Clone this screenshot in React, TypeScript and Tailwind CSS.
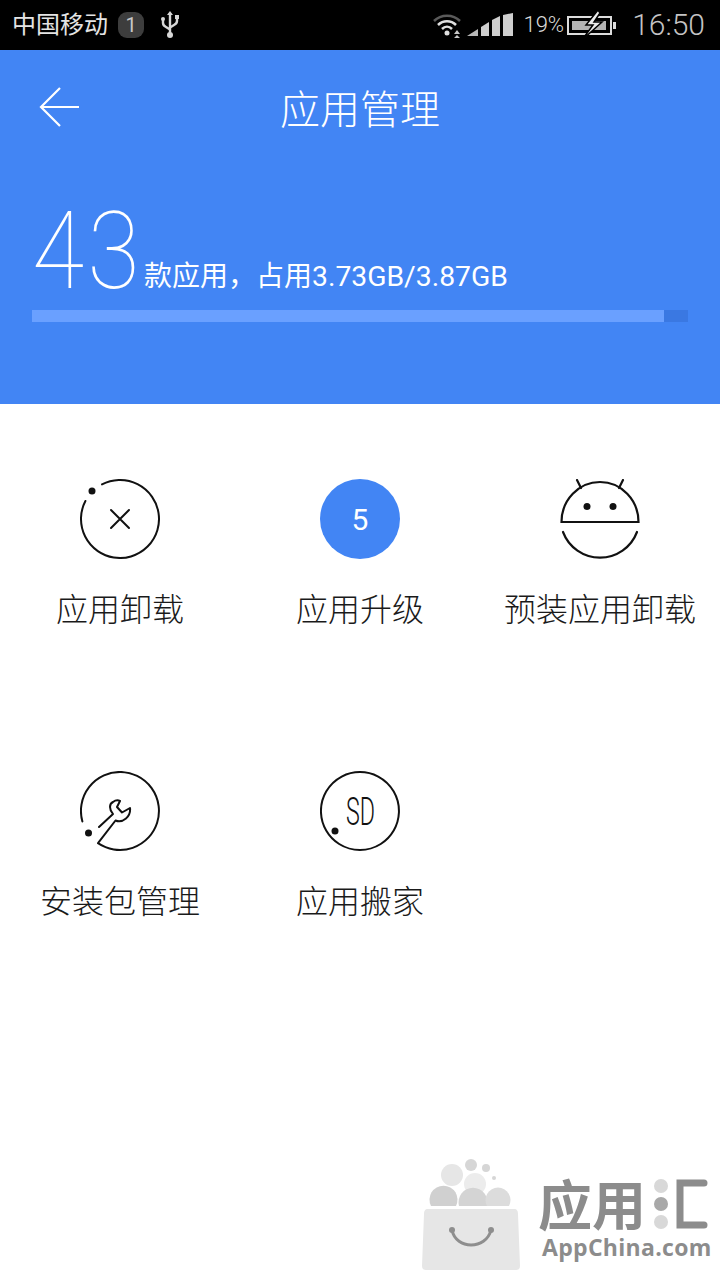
import React from 'react'

const cjk = "font-['Roboto','Noto_Sans_CJK_SC',sans-serif]"

const StatusBar = () => (
  <div className={`h-[50px] bg-black flex items-center pl-3 pr-[15px] text-[#e4e4e4] ${cjk}`}>
    <span className="text-[24px] leading-none">中国移动</span>
    <span className="ml-[10px] w-[26px] h-[26px] rounded-[9px] bg-[#3d3d3d] text-[#c8c8c8] text-[20px] leading-[26px] text-center">1</span>
    <svg className="ml-[15px]" width="22" height="30" viewBox="0 0 22 30" fill="none" stroke="#d8d8d8" strokeWidth="2.4">
      <path d="M11 3V24" />
      <path d="M11 1l3 4H8z" fill="#d8d8d8" stroke="none" />
      <path d="M4 10v3c0 2 1 3 3 4l4 2.500" />
      <path d="M18 8v3c0 2-1 3-3 4l-4 2.500" />
      <circle cx="4" cy="9" r="2" fill="#d8d8d8" stroke="none" />
      <rect x="16" y="5" width="4" height="4" fill="#d8d8d8" stroke="none" />
      <circle cx="11" cy="25" r="3" fill="#d8d8d8" stroke="none" />
    </svg>
    <div className="ml-auto flex items-center">
      <svg width="28" height="28" viewBox="0 0 28 28" fill="none">
        <path d="M1 10C8 3 20 3 27 10" stroke="#5a5a5a" strokeWidth="2.500" />
        <path d="M5 14C10 9 18 9 23 14" stroke="#e0e0e0" strokeWidth="2.500" />
        <path d="M9 18C12 15 16 15 19 18" stroke="#e0e0e0" strokeWidth="2.500" />
        <circle cx="14" cy="22" r="2.500" fill="#e0e0e0" />
        <path d="M24 19l3 4h-6zM24 24l3 3h-6z" fill="#c8c8c8" />
      </svg>
      <svg className="ml-[6px]" width="48" height="24" viewBox="0 0 48 24" fill="#cfcfcf">
        <path d="M0 23L11 16V23Z" fill="#b8b8b8" />
        <path d="M14 14L22 9V23H14Z" />
        <path d="M25 7L33 3V23H25Z" />
        <path d="M36 2L46 0V23H36Z" />
      </svg>
      <span className="ml-[8px] text-[22px] leading-none text-[#d8d8d8] font-light">19%</span>
      <svg className="ml-[3px]" width="50" height="32" viewBox="0 0 50 32" fill="none">
        <rect x="1" y="8" width="43" height="17" stroke="#dcdcdc" strokeWidth="2" />
        <rect x="46" y="13" width="3" height="7" fill="#dcdcdc" />
        <path d="M5 12H39V21H5Z" fill="#b4b4b4" />
        <path d="M31 1L19 16H26L15 31L35 13H27L33 4Z" fill="#ececec" stroke="#000" strokeWidth="1.500" />
      </svg>
      <span className="ml-[15px] text-[30px] leading-none font-light text-[#c4c4c4]">16:50</span>
    </div>
  </div>
)

const Header = () => (
  <div className="h-[354px] bg-[#4285f4] text-white">
    <div className="relative h-[122px] flex items-center justify-center">
      <svg className="absolute left-[38px] top-[35px]" width="44" height="44" viewBox="0 0 44 44" fill="none" stroke="#fff" strokeWidth="2.200">
        <path d="M41 22H4" />
        <path d="M22 3L3 22L22 41" />
      </svg>
      <span className={`text-[40px] leading-none font-light ${cjk}`}>应用管理</span>
    </div>
    <div className="h-[138px] pl-[32px] flex items-end">
      <span className="w-[112px] h-[113px] shrink-0 origin-left scale-x-[0.88] font-['Roboto',sans-serif] text-[108px] leading-none font-thin tracking-[4px]">43</span>
      <span className={`mb-[19px] text-[28px] leading-none ${cjk}`}>
        款应用，占用<span className="text-[28.3px]">3.73GB/3.87GB</span>
      </span>
    </div>
    <div className="mx-[32px] h-[12px] bg-[#3a78e2]">
      <div className="h-full w-[632px] bg-[#6aa0ff]" />
    </div>
  </div>
)

const Ring = ({ children, dash }: { children?: React.ReactNode; dash: string }) => (
  <svg width="80" height="80" viewBox="0 0 80 80" fill="none" stroke="#111" strokeWidth="2" strokeLinecap="round" strokeLinejoin="round">
    <path d={dash} />
    {children}
  </svg>
)

const UninstallIcon = () => (
  <Ring dash="M22 5.400A39 39 0 1 1 5.400 22">
    <circle cx="12" cy="12" r="3.500" fill="#111" stroke="none" />
    <path d="M31 31L49 49M49 31L31 49" />
  </Ring>
)

const UpgradeIcon = () => (
  <div className="w-[80px] h-[80px] rounded-full bg-[#4285f4] text-white text-[30px] flex items-center justify-center font-['Roboto',sans-serif]">5</div>
)

const AndroidIcon = () => (
  <svg width="80" height="80" viewBox="0 0 80 80" fill="none" stroke="#111" strokeWidth="2.200" strokeLinecap="round">
    <path d="M1.500 43A38.500 40 0 0 1 78.500 43Z" />
    <path d="M17 1L21 9M63 1L59 9" />
    <path d="M3 53A39.500 39.500 0 0 0 77 53" />
    <circle cx="27" cy="27.500" r="3.500" fill="#111" stroke="none" />
    <circle cx="53" cy="27.500" r="3.500" fill="#111" stroke="none" />
  </svg>
)

const PackageIcon = () => (
  <Ring dash="M2.400 50.500A39 39 0 1 1 18 72.200L35.500 49.500C39 51 43 50 46 47.500C49 45 50.500 41 50 37L42 41.500L37 36L40 30C38 29 35 29.500 33 31C29 33 29 38 33 43L19 56">
    <circle cx="8.500" cy="62" r="3.500" fill="#111" stroke="none" />
  </Ring>
)

const MoveIcon = () => (
  <Ring dash="M40 1A39 39 0 1 1 39.900 1">
    <circle cx="15" cy="60" r="3.500" fill="#111" stroke="none" />
    <text x="26" y="54" stroke="none" fill="#111" fontFamily="Roboto, sans-serif" fontWeight="300" fontSize="39" textLength="29" lengthAdjust="spacingAndGlyphs">SD</text>
  </Ring>
)

const items = [
  { label: '应用卸载', icon: <UninstallIcon /> },
  { label: '应用升级', icon: <UpgradeIcon /> },
  { label: '预装应用卸载', icon: <AndroidIcon /> },
  { label: '安装包管理', icon: <PackageIcon /> },
  { label: '应用搬家', icon: <MoveIcon /> },
]

const Watermark = () => (
  <div className="absolute left-[420px] top-[1158px] w-[300px] h-[122px] flex">
    <svg width="104" height="114" viewBox="0 0 104 114">
      <circle cx="32" cy="17" r="11" fill="#e6e6e6" />
      <circle cx="51" cy="7" r="6" fill="#d6d6d6" />
      <circle cx="66" cy="10" r="4" fill="#d6d6d6" />
      <circle cx="74" cy="20" r="2" fill="#d6d6d6" />
      <circle cx="55" cy="26" r="11" fill="#ececec" />
      <path d="M11 48A14 14 0 1 1 36 48Z" fill="#d0d0d0" />
      <path d="M39 48A14.500 14.500 0 1 1 67 48Z" fill="#d4d4d4" />
      <path d="M67 48A12.500 12.500 0 1 1 89 48Z" fill="#dcdcdc" />
      <path d="M8 51H94C97 51 98 53 98 56L100 108C100 111 98 112 96 112H6C4 112 2 111 2 108L4 56C4 53 5 51 8 51Z" fill="#e6e6e6" />
      <path d="M32 72C36 92 66 92 71 72" fill="none" stroke="#8e8e8e" strokeWidth="3" strokeLinecap="round" />
      <circle cx="32" cy="72" r="3" fill="#8e8e8e" />
      <circle cx="71" cy="72" r="3" fill="#8e8e8e" />
    </svg>
    <div className="ml-[14px] flex flex-col text-[#8c8c8c] font-bold">
      <div className="flex items-start h-[78px] pt-[18px]">
        <span className="font-['Noto_Sans_CJK_SC',sans-serif] text-[54px] leading-[54px]">应用</span>
        <svg className="ml-[2px] mt-[2px]" width="60" height="52" viewBox="0 0 60 52" fill="none">
          <circle cx="13" cy="8" r="7" fill="#d8d8d8" />
          <circle cx="13" cy="26" r="7" fill="#a8a8a8" />
          <circle cx="13" cy="44" r="7" fill="#d8d8d8" />
          <path d="M56 5H32V47H56" stroke="#8c8c8c" strokeWidth="7" strokeLinecap="round" />
        </svg>
      </div>
      <span className="pl-[4px] font-['Open_Sans',sans-serif] text-[23px] leading-none tracking-[0.3px]">AppChina.com</span>
    </div>
  </div>
)

const App = () => {
  return (
    <div className="relative w-[720px] h-[1280px] bg-white overflow-hidden">
      <StatusBar />
      <Header />
      <div className="grid grid-cols-3 pt-[75px]">
        {items.map((item) => (
          <div key={item.label} className="h-[292px] flex flex-col items-center">
            <div className="h-[80px] flex items-start justify-center">{item.icon}</div>
            <p className={`mt-[31px] text-[32px] leading-[40px] font-light text-[#1a1a1a] whitespace-nowrap ${cjk}`}>{item.label}</p>
          </div>
        ))}
      </div>
      <Watermark />
    </div>
  )
}

export default App
